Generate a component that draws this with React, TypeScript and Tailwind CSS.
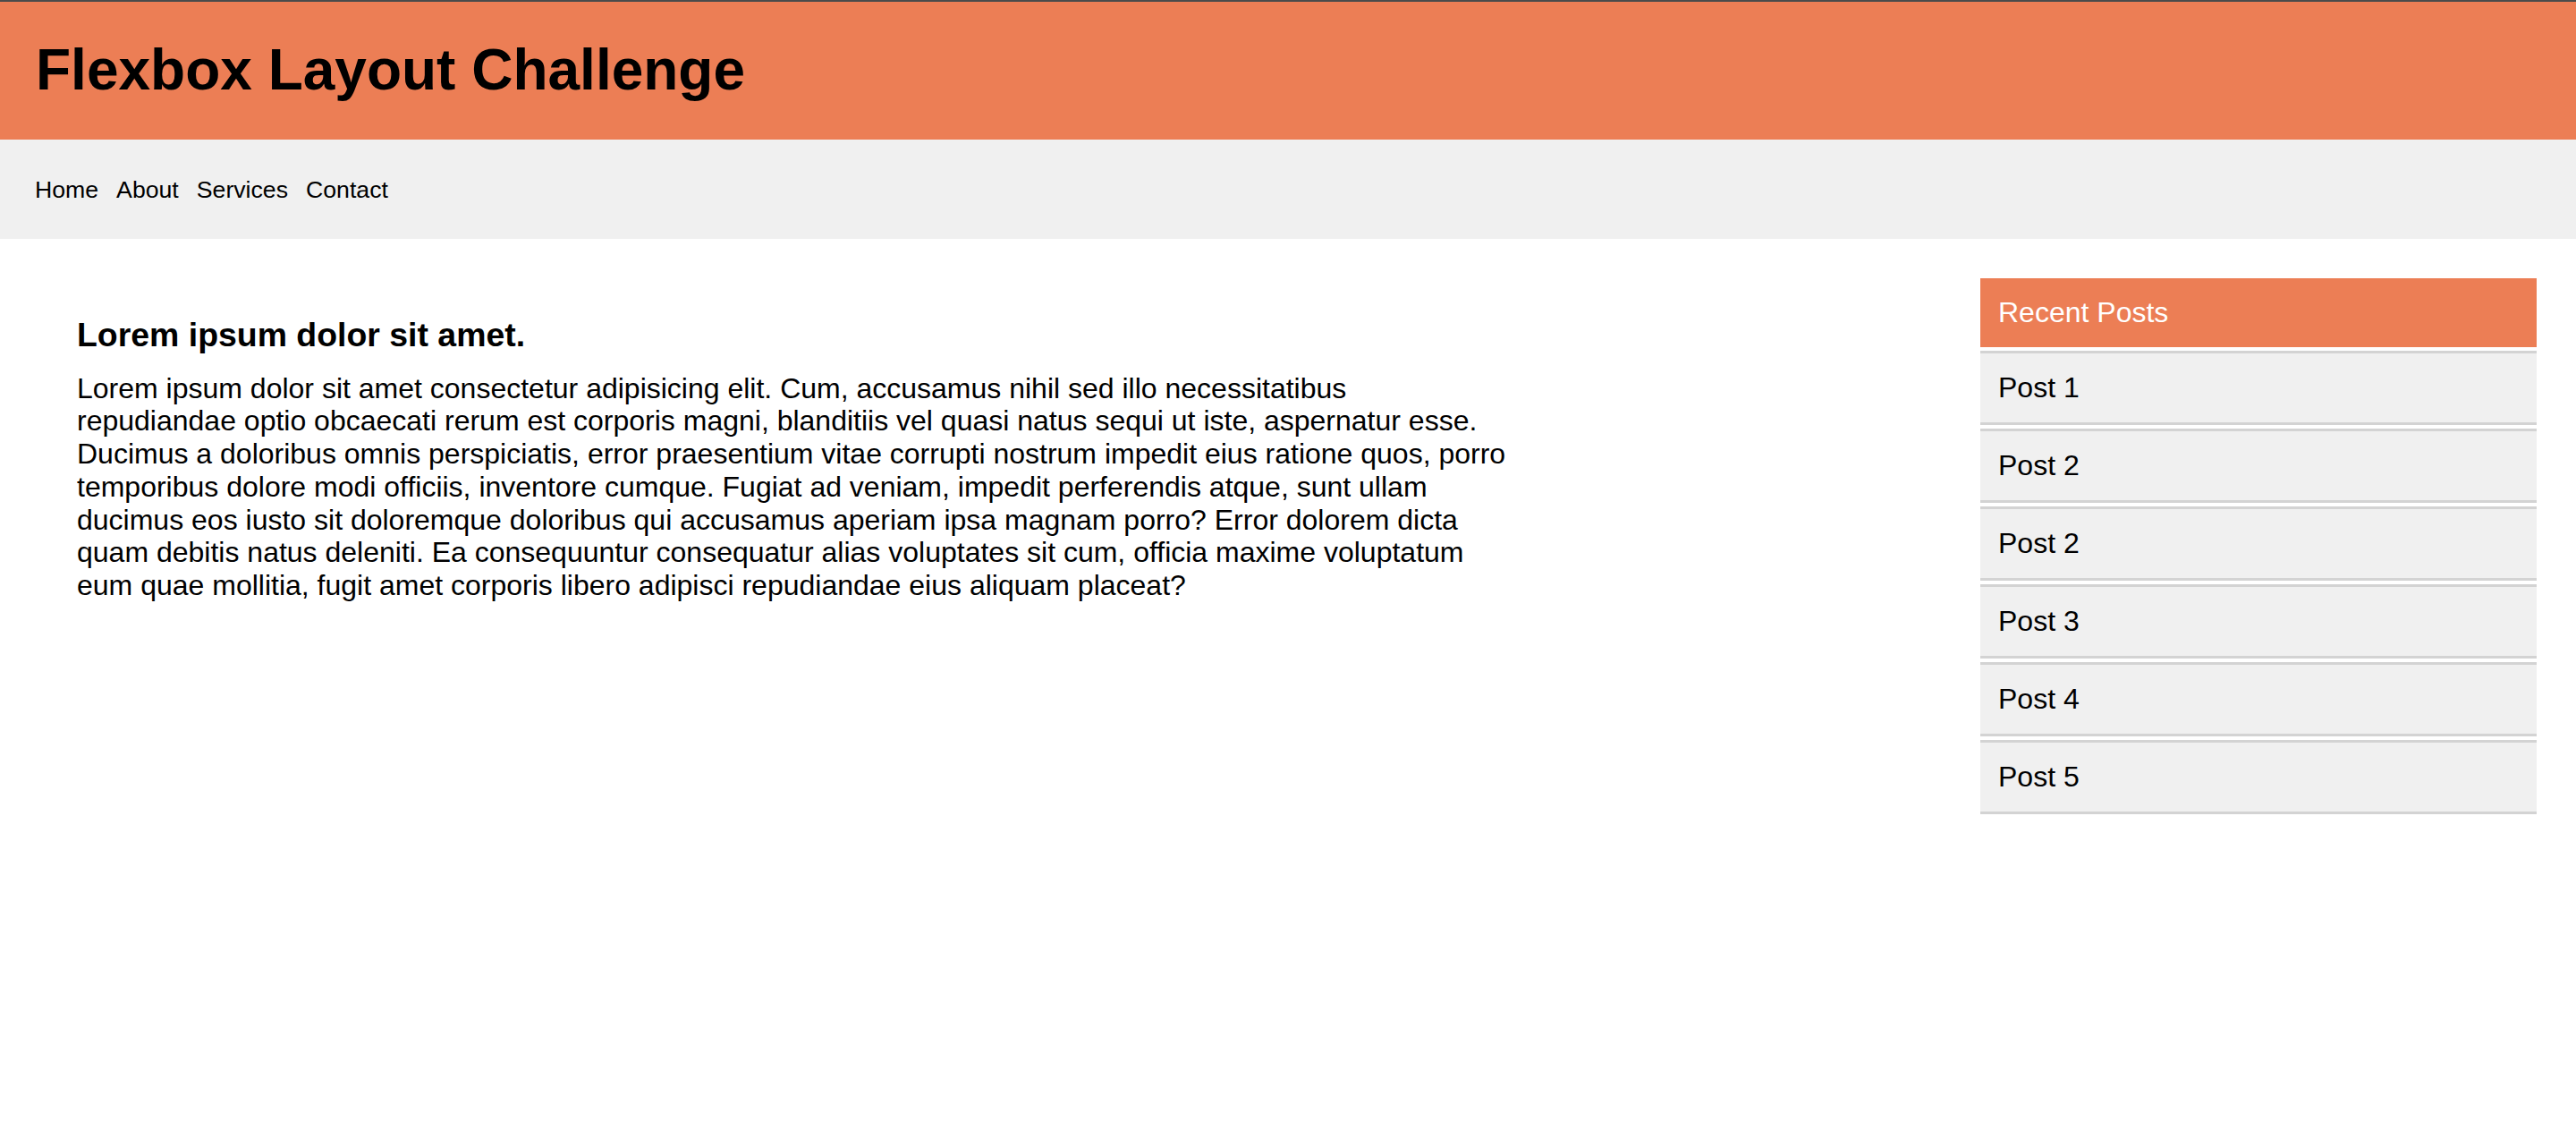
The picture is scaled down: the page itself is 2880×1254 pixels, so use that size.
import React from 'react';

const navLinks = ['Home', 'About', 'Services', 'Contact'];
const posts = ['Post 1', 'Post 2', 'Post 2', 'Post 3', 'Post 4', 'Post 5'];

const bodyText =
  'Lorem ipsum dolor sit amet consectetur adipisicing elit. Cum, accusamus nihil sed illo necessitatibus repudiandae optio obcaecati rerum est corporis magni, blanditiis vel quasi natus sequi ut iste, aspernatur esse. Ducimus a doloribus omnis perspiciatis, error praesentium vitae corrupti nostrum impedit eius ratione quos, porro temporibus dolore modi officiis, inventore cumque. Fugiat ad veniam, impedit perferendis atque, sunt ullam ducimus eos iusto sit doloremque doloribus qui accusamus aperiam ipsa magnam porro? Error dolorem dicta quam debitis natus deleniti. Ea consequuntur consequatur alias voluptates sit cum, officia maxime voluptatum eum quae mollitia, fugit amet corporis libero adipisci repudiandae eius aliquam placeat?';

const App: React.FC = () => {
  return (
    <div className="min-h-screen bg-white text-black font-['Liberation_Sans',Arial,sans-serif]">
      <div className="h-[2px] bg-[#4b4b4b]" />

      {/* header */}
      <header className="h-[154px] bg-[#ec7e55] flex items-center px-[40px]">
        <h1 className="text-[64px] leading-[73.6px] font-bold">Flexbox Layout Challenge</h1>
      </header>

      {/* nav */}
      <nav className="h-[111px] bg-[#f0f0f0] flex items-center gap-[20px] px-[39px] text-[26.67px] leading-[30px]">
        {navLinks.map((link) => (
          <a key={link} href="#" className="text-black">
            {link}
          </a>
        ))}
      </nav>

      <main className="flex items-start pt-[44px] pr-[44px]">
        <article className="pt-[42px] pl-[86px]">
          <h3 className="text-[37.44px] leading-[43px] font-bold">Lorem ipsum dolor sit amet.</h3>
          <p className="mt-[19.5px] w-[1600px] text-[32px] leading-[36.8px]">{bodyText}</p>
        </article>

        <aside className="ml-auto w-[622px] flex flex-col gap-[4px]">
          <div className="h-[77px] bg-[#ec7e55] flex items-center pl-[20px] text-white text-[32px] leading-[36.8px]">
            Recent Posts
          </div>
          {posts.map((post, i) => (
            <div
              key={i}
              className="h-[83px] bg-[#f0f0f0] border-y-[3px] border-[#d3d3d3] flex items-center pl-[20px] text-[32px] leading-[36.8px]"
            >
              {post}
            </div>
          ))}
        </aside>
      </main>
    </div>
  );
};

export default App;
